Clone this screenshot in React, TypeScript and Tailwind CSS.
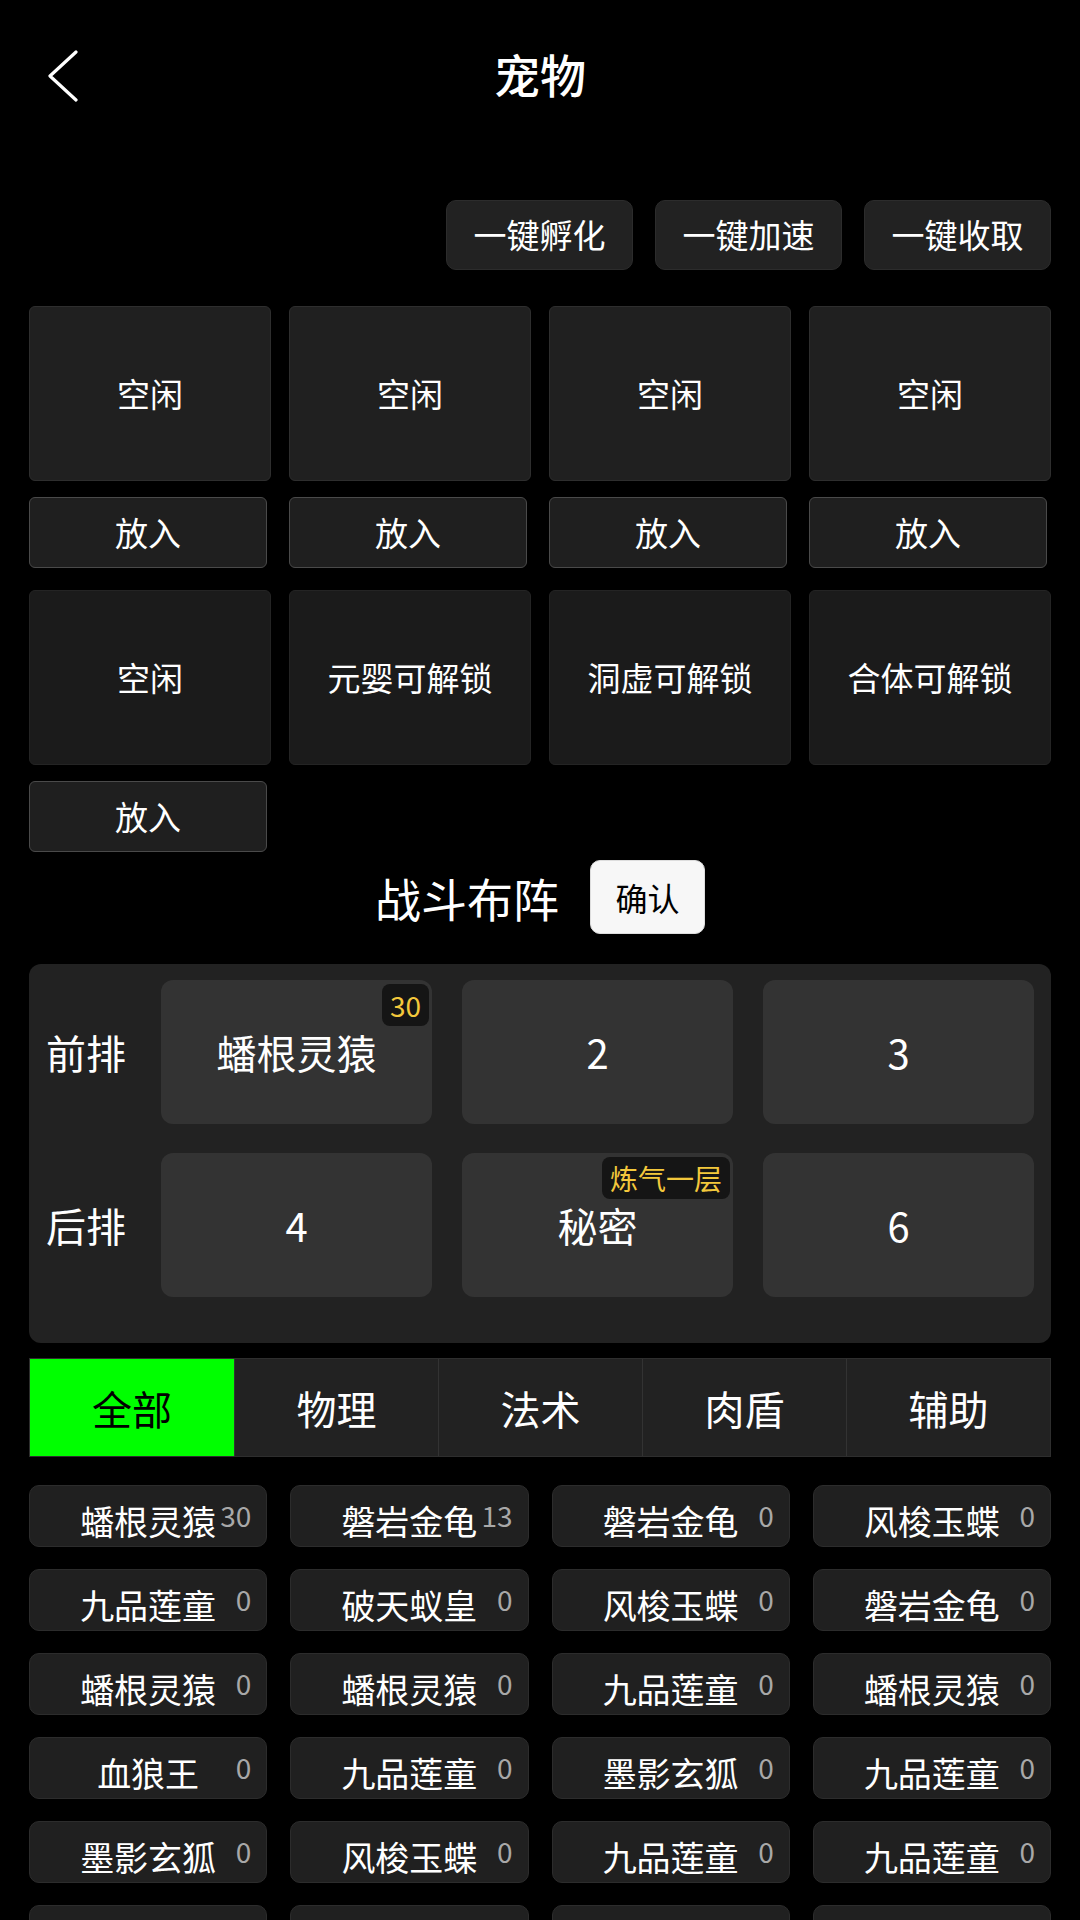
import React from "react";

const SLOTS_TOP = [
  { label: "空闲", put: true },
  { label: "空闲", put: true },
  { label: "空闲", put: true },
  { label: "空闲", put: true },
];

const SLOTS_BOTTOM = [
  { label: "空闲", put: true },
  { label: "元婴可解锁", put: false },
  { label: "洞虚可解锁", put: false },
  { label: "合体可解锁", put: false },
];

const TABS = ["全部", "物理", "法术", "肉盾", "辅助"];

const PETS: [string, number][] = [
  ["蟠根灵猿", 30],
  ["磐岩金龟", 13],
  ["磐岩金龟", 0],
  ["风梭玉蝶", 0],
  ["九品莲童", 0],
  ["破天蚁皇", 0],
  ["风梭玉蝶", 0],
  ["磐岩金龟", 0],
  ["蟠根灵猿", 0],
  ["蟠根灵猿", 0],
  ["九品莲童", 0],
  ["蟠根灵猿", 0],
  ["血狼王", 0],
  ["九品莲童", 0],
  ["墨影玄狐", 0],
  ["九品莲童", 0],
  ["墨影玄狐", 0],
  ["风梭玉蝶", 0],
  ["九品莲童", 0],
  ["九品莲童", 0],
];

function BackIcon() {
  return (
    <svg width="34" height="54" viewBox="0 0 34 54" fill="none">
      <path
        d="M30 2 L4 26 L30 50"
        stroke="white"
        strokeWidth="3.2"
        strokeLinecap="round"
        strokeLinejoin="round"
      />
    </svg>
  );
}

function Slot({ label, put, dark }: { label: string; put: boolean; dark?: boolean }) {
  return (
    <div className="flex flex-col gap-[16px]">
      <div
        className={
          dark
            ? "h-[175px] rounded-[6px] bg-[#1b1b1b] border border-[#242424] flex items-center justify-center text-[33px] text-white"
            : "h-[175px] rounded-[6px] bg-[#202020] border border-[#2e2e2e] flex items-center justify-center text-[33px] text-white"
        }
      >
        {label}
      </div>
      {put && (
        <div className="w-[238px] h-[71px] rounded-[6px] bg-[#1f1f1f] border border-[#4a4a4a] flex items-center justify-center text-[33px] text-white">
          放入
        </div>
      )}
    </div>
  );
}

function FormationSlot({ text, badge }: { text: string; badge?: string }) {
  return (
    <div className="relative h-[144px] rounded-[12px] bg-[#333333] flex items-center justify-center text-[40px] text-white">
      {text}
      {badge && (
        <span className="absolute top-[4px] right-[3px] h-[42px] px-[8px] rounded-[8px] bg-[#151515] text-[#f3c83c] text-[28px] leading-none flex items-center">
          {badge}
        </span>
      )}
    </div>
  );
}

export default function App() {
  return (
    <div className="w-[1080px] h-[1920px] overflow-hidden bg-black text-white font-['Noto_Sans_CJK_SC','Noto_Sans',sans-serif]">
      {/* header */}
      <div className="relative h-[146px] flex items-center justify-center">
        <div className="absolute left-[46px] top-[50px]">
          <BackIcon />
        </div>
        <h1 className="text-[46px] font-medium">宠物</h1>
      </div>

      <div className="px-[29px]">
        {/* quick actions */}
        <div className="flex justify-end gap-[22px] mt-[54px]">
          {["一键孵化", "一键加速", "一键收取"].map((t) => (
            <div
              key={t}
              className="w-[187px] h-[70px] rounded-[10px] bg-[#222222] border border-[#2c2c2c] flex items-center justify-center text-[33px]"
            >
              {t}
            </div>
          ))}
        </div>

        {/* hatch slots */}
        <div className="grid grid-cols-4 gap-x-[18px] gap-y-[22px] mt-[36px]">
          {SLOTS_TOP.map((s, i) => (
            <Slot key={"t" + i} label={s.label} put={s.put} />
          ))}
          {SLOTS_BOTTOM.map((s, i) => (
            <Slot key={"b" + i} label={s.label} put={s.put} dark />
          ))}
        </div>

        {/* formation */}
        <div className="flex items-center justify-center gap-[31px] mt-[8px]">
          <span className="text-[46px] font-normal">战斗布阵</span>
          <div className="w-[115px] h-[74px] rounded-[10px] bg-[#f7f7f7] border border-[#dddddd] flex items-center justify-center text-[32px] text-black">
            确认
          </div>
        </div>

        <div className="mt-[30px] rounded-[12px] bg-[#222222] pl-[17px] pr-[17px] pt-[16px] pb-[46px] flex flex-col gap-[29px]">
          <div className="flex items-center">
            <span className="w-[115px] text-[40px]">前排</span>
            <div className="flex-1 grid grid-cols-3 gap-[30px]">
              <FormationSlot text="蟠根灵猿" badge="30" />
              <FormationSlot text="2" />
              <FormationSlot text="3" />
            </div>
          </div>
          <div className="flex items-center">
            <span className="w-[115px] text-[40px]">后排</span>
            <div className="flex-1 grid grid-cols-3 gap-[30px]">
              <FormationSlot text="4" />
              <FormationSlot text="秘密" badge="炼气一层" />
              <FormationSlot text="6" />
            </div>
          </div>
        </div>

        {/* tabs */}
        <div className="mt-[15px] h-[99px] grid grid-cols-5 border border-[#2e2e2e] bg-[#222222]">
          {TABS.map((t, i) => (
            <div
              key={t}
              className={
                i === 0
                  ? "flex items-center justify-center bg-[#00ff00] text-black text-[40px]"
                  : "flex items-center justify-center border-l border-[#333333] text-white text-[40px]"
              }
            >
              {t}
            </div>
          ))}
        </div>

        {/* pet list */}
        <div className="mt-[28px] grid grid-cols-4 gap-x-[23px] gap-y-[22px]">
          {PETS.map(([name, n], i) => (
            <div
              key={i}
              className="relative h-[62px] rounded-[10px] bg-[#202020] border border-[#2c2c2c] flex items-center justify-center pt-[10px] text-[34px] leading-none"
            >
              {name}
              <span className="absolute right-[15px] top-[15px] text-[28px] leading-none text-[#a8a8a8]">
                {n}
              </span>
            </div>
          ))}
          {[0, 1, 2, 3].map((i) => (
            <div
              key={"more" + i}
              className="h-[62px] rounded-[10px] bg-[#202020] border border-[#2c2c2c]"
            />
          ))}
        </div>
      </div>
    </div>
  );
}
